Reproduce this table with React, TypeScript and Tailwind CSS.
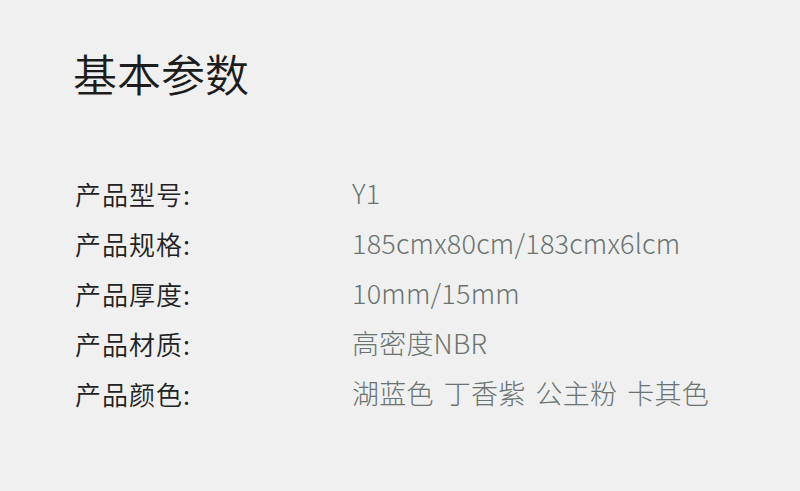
const rows = [
  { label: '产品型号:', value: 'Y1' },
  { label: '产品规格:', value: '185cmx80cm/183cmx6lcm' },
  { label: '产品厚度:', value: '10mm/15mm' },
  { label: '产品材质:', value: '高密度NBR' },
  { label: '产品颜色:', value: '湖蓝色 丁香紫 公主粉 卡其色' },
];

export default function App() {
  return (
    <div
      className="w-[800px] h-[491px] bg-[#f0f0f0] overflow-hidden"
      style={{ fontFamily: '"Noto Sans CJK SC", "Noto Sans", sans-serif' }}
    >
      <div className="pl-[73px] pt-[45px]">
        <h1 className="text-[44px] leading-[56px] font-[350] text-[#1c1c1c]">基本参数</h1>
        <div className="mt-[67px] flex flex-col">
          {rows.map((r) => (
            <div key={r.label} className="flex items-center h-[50px]">
              <span className="w-[279px] shrink-0 pl-[2px] text-[26px] font-[350] text-[#222] tracking-[1px]">{r.label}</span>
              <span className="text-[27px] font-light text-[#6a736f] tracking-[0.2px] [word-spacing:4px]">{r.value}</span>
            </div>
          ))}
        </div>
      </div>
    </div>
  );
}
